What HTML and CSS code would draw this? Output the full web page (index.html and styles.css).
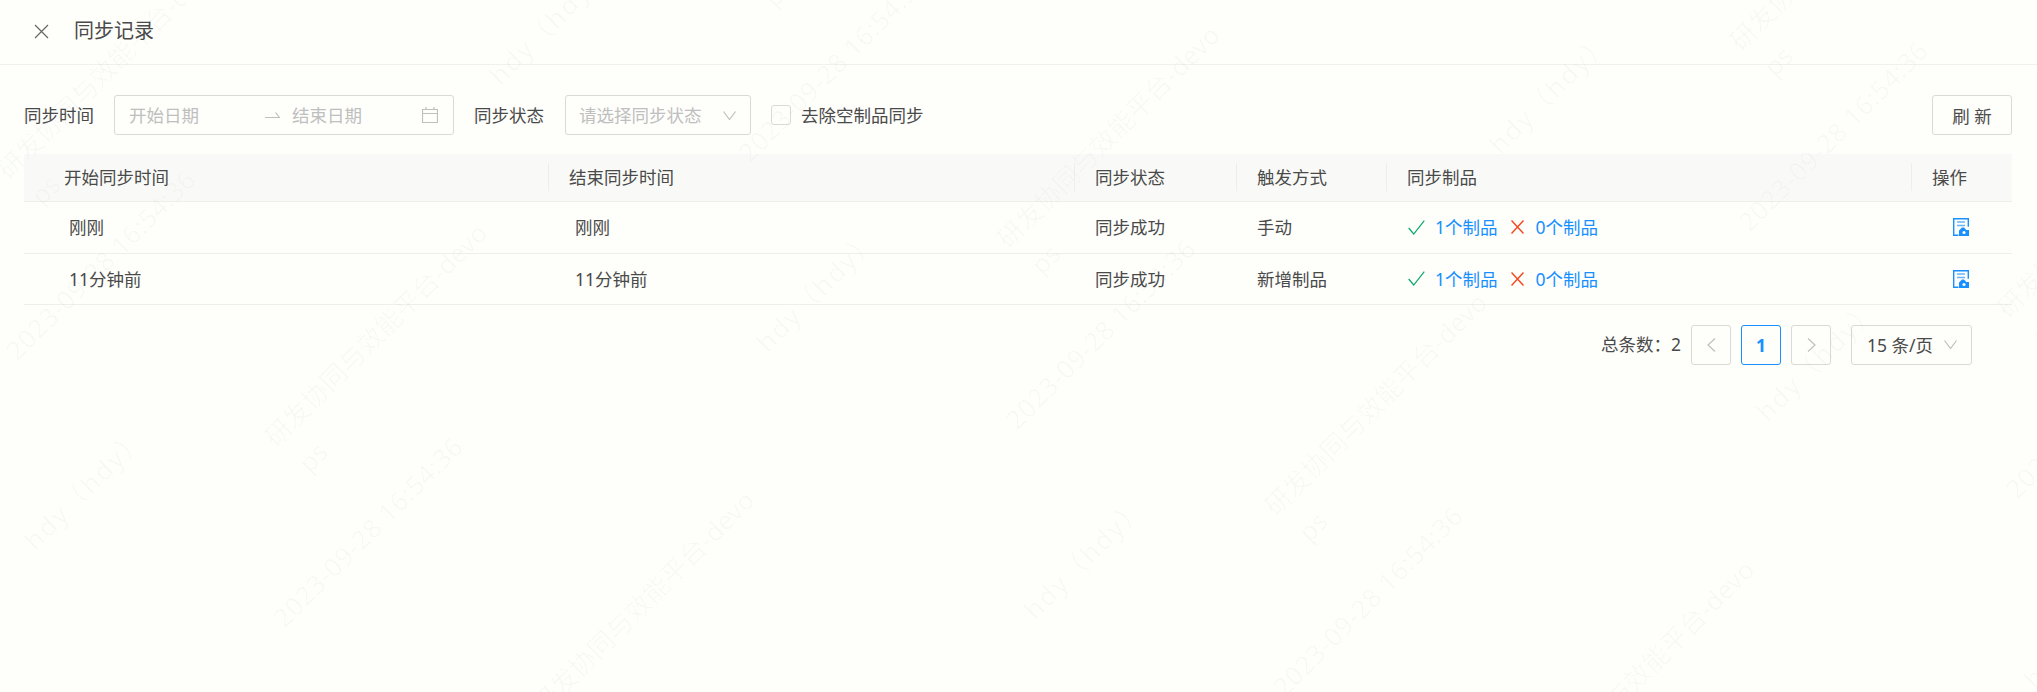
FILE: index.html
```html
<!DOCTYPE html>
<html lang="zh-CN">
<head>
    <meta charset="UTF-8">
    <title>同步记录</title>
    <link rel="stylesheet" href="styles.css">
</head>
<body>
    <header class="page-header">
        <svg class="close-icon" width="15" height="15" viewBox="0 0 15 15"><path d="M1 1l13 13M14 1L1 14"/></svg>
        <h1>同步记录</h1>
    </header>

    <main class="content">
        <section class="filters">
            <label class="filter-label">同步时间</label>
            <div class="field date-range">
                <span class="date-text">开始日期</span>
                <svg class="date-arrow" width="15" height="8" viewBox="0 0 15 8"><path d="M0 6.5h14.5L10.500 1.500"/></svg>
                <span class="date-text">结束日期</span>
                <svg class="calendar-icon" width="16" height="16" viewBox="0 0 16 16"><path d="M.5 2.500h15v13H.5zM.5 6.500h15M4 0v3M12 0v3"/></svg>
            </div>
            <label class="filter-label">同步状态</label>
            <div class="field status-select">
                <span class="date-text">请选择同步状态</span>
                <svg class="chevron" width="13" height="9" viewBox="0 0 13 9"><path d="M.5.500l6 8 6-8"/></svg>
            </div>
            <label class="check-wrap">
                <span class="check-box"></span>
                <span>去除空制品同步</span>
            </label>
            <button class="refresh-btn">刷 新</button>
        </section>

        <table class="sync-table">
            <colgroup>
                <col class="col-start">
                <col class="col-end">
                <col class="col-status">
                <col class="col-trigger">
                <col class="col-products">
                <col class="col-action">
            </colgroup>
            <thead>
                <tr>
                    <th class="first-cell">开始同步时间</th>
                    <th>结束同步时间</th>
                    <th>同步状态</th>
                    <th>触发方式</th>
                    <th>同步制品</th>
                    <th>操作</th>
                </tr>
            </thead>
            <tbody>
                <tr>
                    <td class="first-cell">刚刚</td>
                    <td class="time-cell">刚刚</td>
                    <td>同步成功</td>
                    <td>手动</td>
                    <td>
                        <div class="products">
                            <svg class="ok-icon" width="17" height="15" viewBox="0 0 17 15"><path d="M.7 8l5 6L16.300.700"/></svg>
                            <a class="product-link">1个制品</a>
                            <svg class="fail-icon" width="13" height="14" viewBox="0 0 13 14"><path d="M.5.500l12 13M12.500.500l-12 13"/></svg>
                            <a class="product-link">0个制品</a>
                        </div>
                    </td>
                    <td class="action-cell">
                        <svg class="file-icon" width="16" height="18" viewBox="0 0 16 18"><path class="file-line" d="M5.500 17.300H.7V.7h14.600v8"/><path class="file-bars" d="M4 4h8M4 7.500h8"/><path class="file-lock" d="M6 18v-5.500l1.500-1.500L9 9.500h2l1.500 1.500.500 1H16v6z"/><circle class="file-hole" cx="11" cy="14.500" r="1.600"/></svg>
                    </td>
                </tr>
                <tr>
                    <td class="first-cell">11分钟前</td>
                    <td class="time-cell">11分钟前</td>
                    <td>同步成功</td>
                    <td>新增制品</td>
                    <td>
                        <div class="products">
                            <svg class="ok-icon" width="17" height="15" viewBox="0 0 17 15"><path d="M.7 8l5 6L16.300.700"/></svg>
                            <a class="product-link">1个制品</a>
                            <svg class="fail-icon" width="13" height="14" viewBox="0 0 13 14"><path d="M.5.500l12 13M12.500.500l-12 13"/></svg>
                            <a class="product-link">0个制品</a>
                        </div>
                    </td>
                    <td class="action-cell">
                        <svg class="file-icon" width="16" height="18" viewBox="0 0 16 18"><path class="file-line" d="M5.500 17.300H.7V.7h14.600v8"/><path class="file-bars" d="M4 4h8M4 7.500h8"/><path class="file-lock" d="M6 18v-5.500l1.500-1.500L9 9.500h2l1.500 1.500.500 1H16v6z"/><circle class="file-hole" cx="11" cy="14.500" r="1.600"/></svg>
                    </td>
                </tr>
            </tbody>
        </table>

        <nav class="pagination">
            <span class="total">总条数：2</span>
            <button class="page-btn"><svg width="9" height="14" viewBox="0 0 9 14"><path d="M8 .5L1 7l7 6.500"/></svg></button>
            <button class="page-btn current">1</button>
            <button class="page-btn"><svg width="9" height="14" viewBox="0 0 9 14"><path d="M1 .5L8 7l-7 6.500"/></svg></button>
            <div class="page-size">
                <span>15 条/页</span>
                <svg class="chevron" width="13" height="9" viewBox="0 0 13 9"><path d="M.5.500l6 8 6-8"/></svg>
            </div>
        </nav>
    </main>

    <div class="watermark" id="watermark"></div>

    <script src="watermark.js"></script>
</body>
</html>
```

FILE: styles.css
```css
* {
    box-sizing: border-box;
}

html, body {
    height: 100%;
}

body {
    font-family: "Noto Sans", "Noto Sans CJK SC", sans-serif;
    font-size: 17.5px;
    line-height: 24px;
    color: #4a4a4a;
    margin: 0;
    background-color: #fefefb;
    overflow: hidden;
    position: relative;
}

svg {
    display: block;
    fill: none;
    stroke-width: 1.2;
}

.page-header {
    height: 65px;
    padding: 0 0 0 34px;
    display: flex;
    align-items: center;
    gap: 25px;
    border-bottom: 1px solid #f0f0ed;
}

.page-header h1 {
    margin: 0 0 2px;
    font-size: 20px;
    font-weight: 400;
    color: #4a4a4a;
}

.close-icon {
    stroke: #666;
    margin-top: -2px;
}

.content {
    padding: 30px 25px 0 24px;
}

.filters {
    display: flex;
    align-items: center;
    gap: 20px;
    height: 40px;
}

.field {
    height: 40px;
    display: flex;
    align-items: center;
    border: 1px solid #d9d9d6;
    border-radius: 3px;
    color: #bfbfbf;
}

.date-range {
    width: 340px;
    padding-left: 14px;
}

.date-text {
    color: #bfbfbf;
}

.date-arrow {
    stroke: #bfbfbf;
    margin: 0 12px 0 66px;
}

.calendar-icon {
    stroke: #bfbfbf;
    margin-left: 60px;
}

.status-select {
    width: 186px;
    margin-left: 1px;
    padding: 0 14px 0 13px;
    justify-content: space-between;
}

.chevron {
    stroke: #bfbfbf;
}

.check-wrap {
    display: flex;
    align-items: center;
    gap: 10px;
}

.check-box {
    width: 20px;
    height: 20px;
    border: 1px solid #d9d9d6;
    border-radius: 3px;
}

button {
    font-family: inherit;
    font-size: 17.5px;
    color: #4a4a4a;
    background: none;
    cursor: pointer;
}

.refresh-btn {
    margin-left: auto;
    width: 80px;
    height: 40px;
    padding: 0;
    border: 1px solid #d9d9d6;
    border-radius: 3px;
}

.sync-table {
    width: 1988px;
    margin-top: 19px;
    table-layout: fixed;
    border-collapse: collapse;
}

.col-start { width: 524px; }
.col-end { width: 526px; }
.col-status { width: 162px; }
.col-trigger { width: 150px; }
.col-products { width: 525px; }
.col-action { width: 101px; }

.sync-table th, .sync-table td {
    padding: 0 0 0 21px;
    text-align: left;
    font-weight: 400;
    border-bottom: 1px solid #eeeeeb;
}

.sync-table th {
    position: relative;
    height: 47px;
    background-color: #f9faf7;
}

.sync-table th + th::before {
    content: "";
    position: absolute;
    left: 0;
    top: 9px;
    bottom: 10px;
    width: 1px;
    background-color: #eeeeeb;
}

.sync-table td {
    height: 52px;
}

.sync-table tr + tr td {
    height: 51px;
}

.sync-table th.first-cell {
    padding-left: 40px;
}

.sync-table td.first-cell {
    padding-left: 45px;
}

.sync-table td.time-cell {
    padding-left: 27px;
}

.products {
    display: flex;
    align-items: center;
}

.ok-icon {
    stroke: #0aa86c;
    margin: 0 10px 0 1px;
}

.fail-icon {
    stroke: #f5481f;
    stroke-width: 1.5;
    margin: 0 12px 0 13px;
}

.product-link {
    color: #1890ff;
}

.sync-table td.action-cell {
    padding-left: 42px;
}

.file-line {
    stroke: #1890ff;
    stroke-width: 1.4;
}

.file-bars {
    stroke: #69b4ff;
    stroke-width: 1.4;
}

.file-lock {
    fill: #1890ff;
}

.file-hole {
    fill: #fefefb;
}

.pagination {
    display: flex;
    align-items: center;
    gap: 10px;
    margin-top: 20px;
    padding-right: 40px;
    justify-content: flex-end;
}

.total {
    margin-bottom: 2px;
}

.page-btn {
    width: 40px;
    height: 40px;
    padding: 0;
    border: 1px solid #d9d9d6;
    border-radius: 3px;
    display: flex;
    align-items: center;
    justify-content: center;
}

.page-btn svg {
    stroke: #bfbfbf;
}

.page-btn.current {
    color: #1890ff;
    border-color: #1890ff;
    font-weight: 700;
}

.page-size {
    width: 121px;
    height: 40px;
    margin-left: 10px;
    padding: 0 14px 0 15px;
    display: flex;
    align-items: center;
    justify-content: space-between;
    border: 1px solid #d9d9d6;
    border-radius: 3px;
}

/* 水印层 */
.watermark {
    position: absolute;
    left: 0;
    top: 0;
    display: grid;
    grid-template-columns: repeat(5, 658px);
    grid-auto-rows: 378px;
    transform-origin: 0 0;
    transform: rotate(-45deg) translateX(-1158px);
    pointer-events: none;
}

.wm-tile {
    position: relative;
}

.wm-text {
    position: absolute;
    transform: translate(-50%, -50%);
    white-space: nowrap;
    font-size: 26px;
    line-height: 30px;
    color: rgba(60, 70, 50, 0.032);
}

.wm-name { left: 214px; top: 27px; letter-spacing: 2px; }
.wm-project { left: 529px; top: 124px; }
.wm-team { left: 398px; top: 166px; }
.wm-date { left: 384px; top: 258px; letter-spacing: 0.5px; }
```

FILE: watermark.js
```js
// 生成水印
const lines = [
    ["wm-name", "hdy（hdy）"],
    ["wm-project", "研发协同与效能平台-devo"],
    ["wm-team", "ps"],
    ["wm-date", "2023-09-28 16:54:36"]
];

const layer = document.getElementById("watermark");
for (let i = 0; i < 30; i++) {
    const tile = document.createElement("div");
    tile.className = "wm-tile";
    lines.forEach(line => {
        const text = document.createElement("span");
        text.className = "wm-text " + line[0];
        text.textContent = line[1];
        tile.appendChild(text);
    });
    layer.appendChild(tile);
}
```
